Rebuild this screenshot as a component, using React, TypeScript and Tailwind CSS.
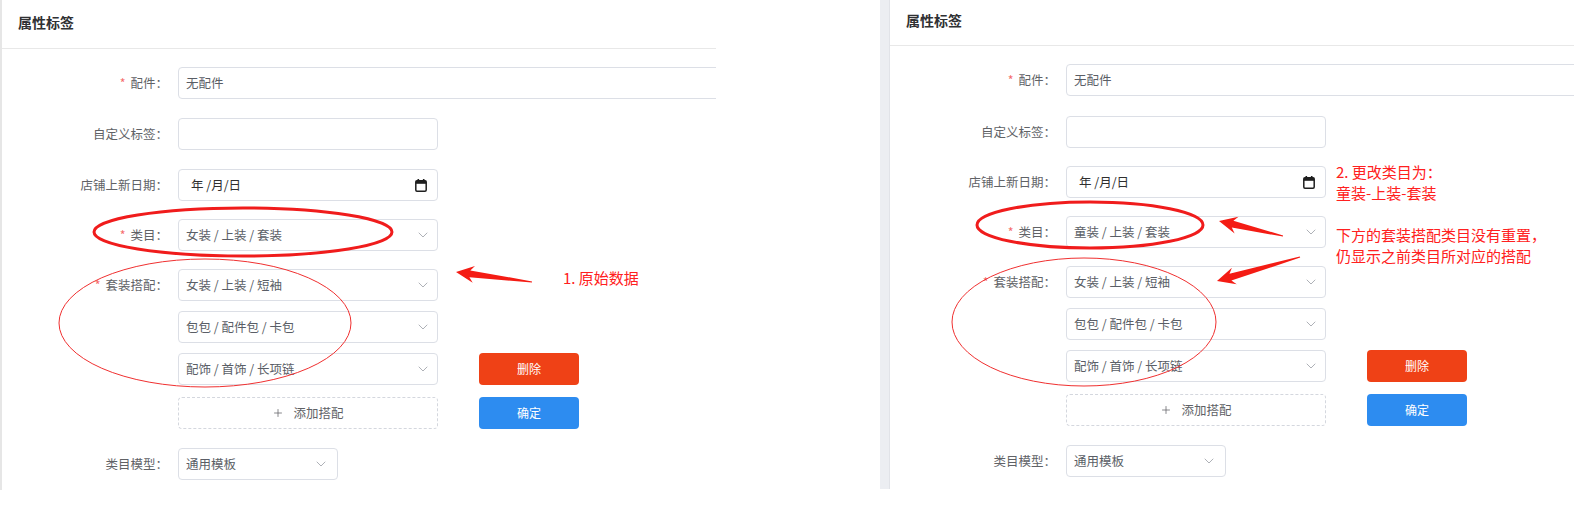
import { ChevronDown, Plus } from "lucide-react";

const font = { fontFamily: '"Noto Sans CJK SC", "Noto Sans", sans-serif' };

// 日历小图标（仿 Chrome 原生日期输入框）
function CalendarIcon() {
  return (
    <svg width="12" height="13" viewBox="0 0 12 13">
      <rect x="2.5" y="0" width="1.6" height="2.5" fill="#1f1f1f" />
      <rect x="7.9" y="0" width="1.6" height="2.5" fill="#1f1f1f" />
      <rect x="0.8" y="1.8" width="10.4" height="10.4" rx="1.2" fill="none" stroke="#1f1f1f" strokeWidth="1.5" />
      <rect x="0.8" y="1.8" width="10.4" height="3" fill="#1f1f1f" />
    </svg>
  );
}

function Label({ text, required, w }: { text: string; required?: boolean; w: string }) {
  return (
    <div className={`${w} h-8 shrink-0 flex items-center justify-end pr-[10px] text-[12.5px] text-[#606266]`}>
      {required && <span className="text-[#f56c6c] mr-[5px]">*</span>}
      {text}：
    </div>
  );
}

function Select({ value, small }: { value: string; small?: boolean }) {
  return (
    <div
      className={`${small ? "w-[160px] pr-[8px]" : "w-[260px] pr-[6px]"} h-8 shrink-0 flex items-center justify-between pl-[7px] border border-[#dcdfe6] rounded bg-white text-[12.5px] text-[#5a5e66]`}
    >
      <span>{value}</span>
      <ChevronDown size={16} strokeWidth={1.4} className="text-[#a8abb2]" />
    </div>
  );
}

function Panel({ right }: { right?: boolean }) {
  const lw = right ? "w-[176px]" : "w-[176px]";
  return (
    <div className={`${right ? "w-[694px] h-[489px] ml-[164px]" : "w-[716px] h-[490px]"} flex shrink-0 overflow-hidden bg-white`}>
      <div className={right ? "w-[10px] shrink-0 bg-[#eceef2] border-r border-[#e1e3e8]" : "w-[2px] shrink-0 bg-[#e6e6e6]"} />
      <div className="flex-1 flex flex-col min-w-0">
        <div
          className={`${right ? "h-[46px] pb-[5px]" : "h-[49px] pb-[4px]"} shrink-0 flex items-center pl-4 border-b border-[#e8e8e8] text-[14px] font-bold text-[#303133]`}
        >
          属性标签
        </div>

        <div className="flex flex-col pt-[18px]">
          <div className="flex">
            <Label text="配件" required w={lw} />
            <div className="w-[700px] h-8 shrink-0 flex items-center pl-[7px] border border-[#dcdfe6] rounded text-[12.5px] text-[#5a5e66]">
              无配件
            </div>
          </div>

          <div className={`flex ${right ? "mt-[20px]" : "mt-[19px]"}`}>
            <Label text="自定义标签" w={lw} />
            <div className="w-[260px] h-8 border border-[#dcdfe6] rounded" />
          </div>

          <div className={`flex ${right ? "mt-[18px]" : "mt-[19px]"}`}>
            <Label text="店铺上新日期" w={lw} />
            <div className="w-[260px] h-8 flex items-center justify-between pl-[12px] pr-[10px] border border-[#dcdfe6] rounded text-[12.5px] text-[#2f2f2f]">
              <span>年 /月/日</span>
              <CalendarIcon />
            </div>
          </div>

          <div className="flex mt-[18px]">
            <Label text="类目" required w={lw} />
            <Select value={right ? "童装 / 上装 / 套装" : "女装 / 上装 / 套装"} />
          </div>

          <div className="flex mt-[18px]">
            <Label text="套装搭配" required w={lw} />
            <div className="flex flex-col">
              <Select value="女装 / 上装 / 短袖" />
              <div className="mt-[10px]">
                <Select value="包包 / 配件包 / 卡包" />
              </div>
              <div className="flex mt-[10px]">
                <Select value="配饰 / 首饰 / 长项链" />
                <button className="ml-[41px] w-[100px] h-8 rounded bg-[#ef4116] text-white text-[12px]">删除</button>
              </div>
              <div className="flex mt-[12px]">
                <div className="w-[260px] h-8 flex items-center justify-center gap-[9px] border border-dashed border-[#d4d7de] rounded text-[12.5px] text-[#606266]">
                  <Plus size={12} strokeWidth={1.5} />
                  添加搭配
                </div>
                <button className="ml-[41px] w-[100px] h-8 rounded bg-[#2d8cf0] text-white text-[12px]">确定</button>
              </div>
            </div>
          </div>

          <div className="flex mt-[19px]">
            <Label text="类目模型" w={lw} />
            <Select value="通用模板" small />
          </div>
        </div>
      </div>
    </div>
  );
}

// 红色标注箭头：从尾部指向箭头尖
function arrowPoints(tx: number, ty: number, hx: number, hy: number) {
  const dx = tx - hx;
  const dy = ty - hy;
  const len = Math.hypot(dx, dy);
  const ux = dx / len;
  const uy = dy / len;
  const nx = -uy;
  const ny = ux;
  const p = (a: number, b: number) => `${(hx + ux * a + nx * b).toFixed(1)},${(hy + uy * a + ny * b).toFixed(1)}`;
  return [p(0, 0), p(18, 8.5), p(14, 3.5), p(len, 0.6), p(len, -0.6), p(14, -3.5), p(18, -8.5)].join(" ");
}

export default function App() {
  return (
    <div className="relative w-[1574px] h-[526px] bg-white overflow-hidden" style={font}>
      <div className="flex">
        <Panel />
        <Panel right />
      </div>

      <svg className="absolute inset-0 pointer-events-none" width="1574" height="526">
        <ellipse cx="243" cy="232" rx="149" ry="24" fill="none" stroke="#f01c1c" strokeWidth="3" />
        <ellipse cx="205" cy="323" rx="146" ry="64" fill="none" stroke="#f03030" strokeWidth="1" />
        <polygon points={arrowPoints(532, 282, 456, 272)} fill="#f41c14" />

        <ellipse cx="1090" cy="225" rx="113" ry="23" fill="none" stroke="#f01c1c" strokeWidth="3" />
        <ellipse cx="1084" cy="322" rx="132" ry="64" fill="none" stroke="#f03030" strokeWidth="1" />
        <polygon points={arrowPoints(1283, 236, 1219, 221)} fill="#f41c14" />
        <polygon points={arrowPoints(1300, 257, 1217, 281)} fill="#f41c14" />
      </svg>

      <div className="absolute left-[563px] top-[267px] text-[15px] leading-[22px] text-[#ff2020]">1. 原始数据</div>
      <div className="absolute left-[1336px] top-[161px] text-[15px] leading-[21px] text-[#ff2020]">
        <div>2. 更改类目为：</div>
        <div>童装-上装-套装</div>
        <div className="mt-[21px]">下方的套装搭配类目没有重置，</div>
        <div>仍显示之前类目所对应的搭配</div>
      </div>
    </div>
  );
}
